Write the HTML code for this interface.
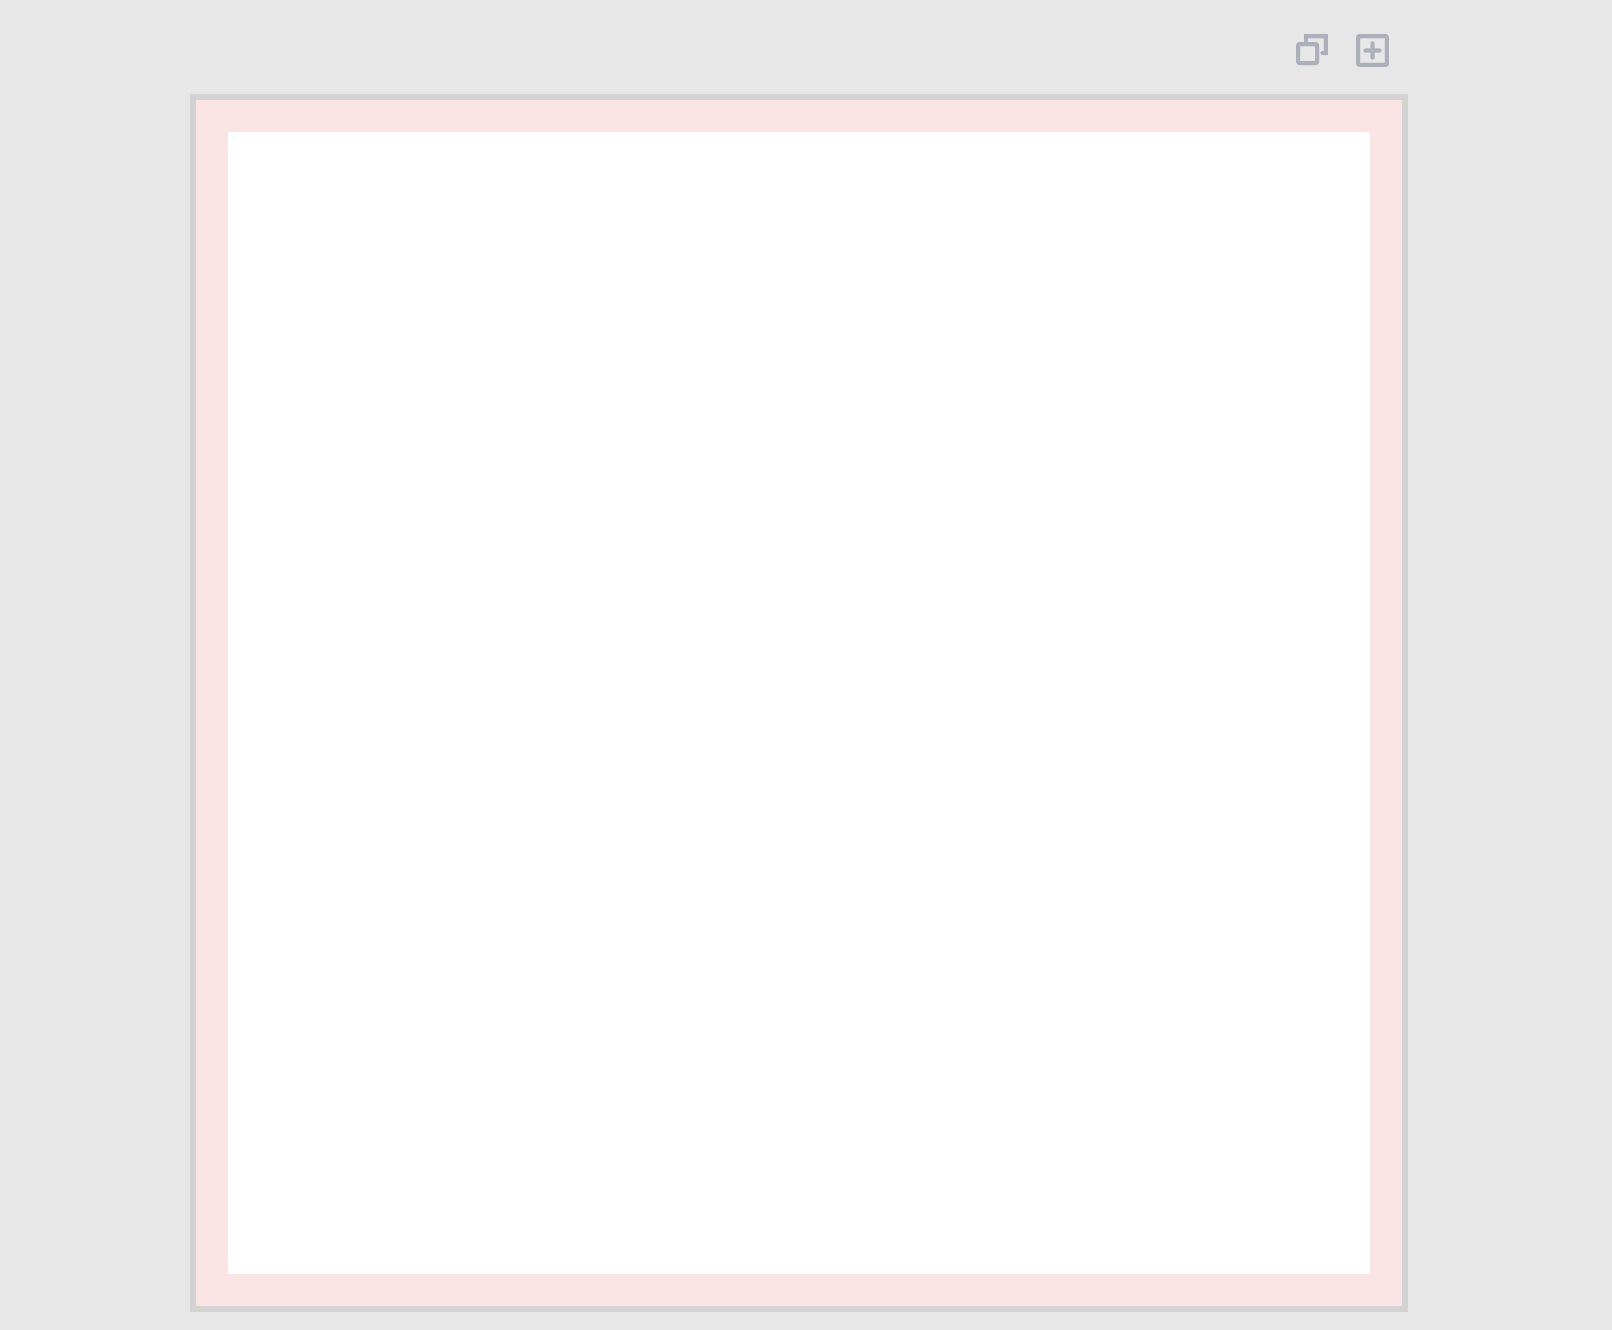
<!DOCTYPE html>
<html><head><style>
html,body{margin:0;padding:0;width:1612px;height:1330px;background:#e7e7e7;overflow:hidden}
.outer{position:absolute;left:190px;top:94px;width:1206px;height:1206px;border:6px solid #d3d3d3;background:#fae4e4}
.inner{position:absolute;left:228px;top:132px;width:1142px;height:1142px;background:#fff}
svg{position:absolute}
</style></head><body>
<svg style="left:1290px;top:28px" width="110" height="44" viewBox="0 0 110 44">
<g fill="none" stroke="#acb0bb" stroke-width="4.2" stroke-linecap="round">
<rect x="8.1" y="16.1" width="19" height="19" rx="1.5"/>
<path d="M16 12.5 V8.1 H35.9 V25 H32.5"/>
<rect x="68.1" y="8.1" width="28.8" height="28.8" rx="1.5"/>
<path d="M75.5 22.5 H89.5 M82.5 15.5 V29.5"/>
</g></svg>
<div class="outer"></div>
<div class="inner"></div>
</body></html>
